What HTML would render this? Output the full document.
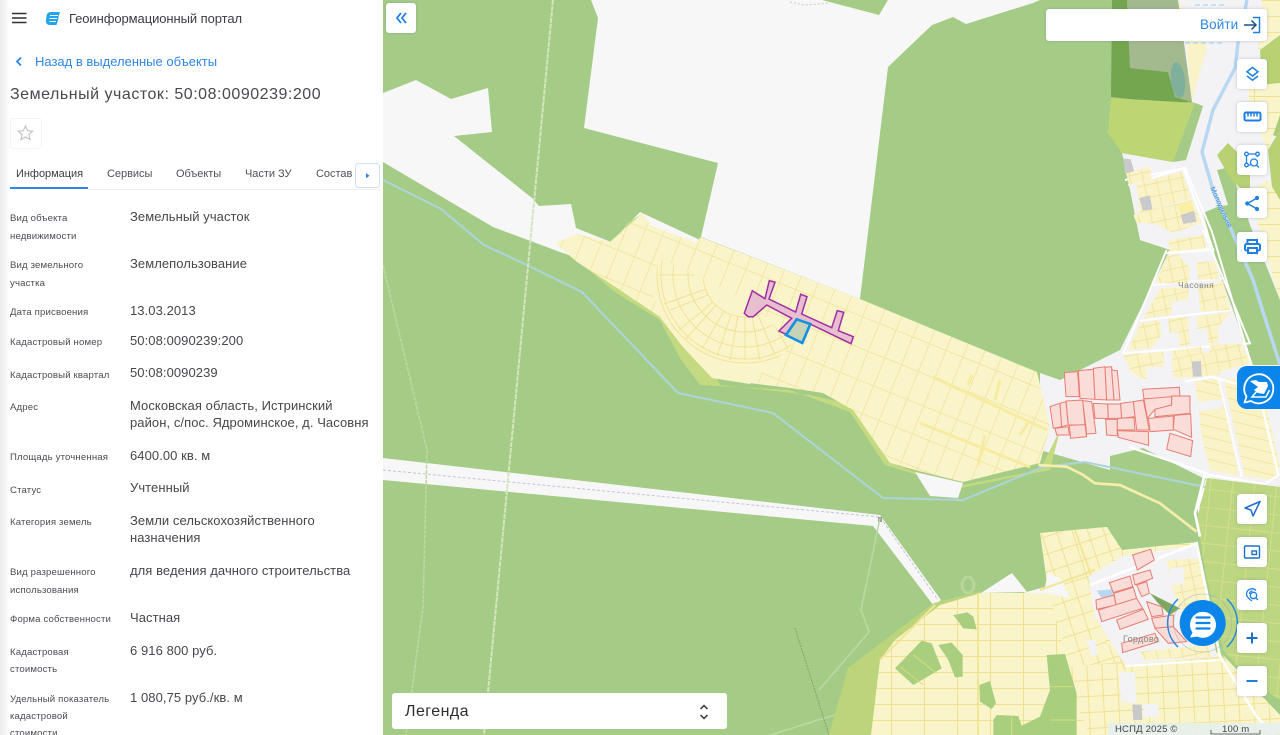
<!DOCTYPE html>
<html lang="ru"><head><meta charset="utf-8"><title>Геоинформационный портал</title>
<style>
html,body{margin:0;padding:0;width:1280px;height:735px;overflow:hidden;background:#a5cc86;font-family:"Liberation Sans","DejaVu Sans",sans-serif}
#map{position:absolute;left:0;top:0}
#panel{position:absolute;left:0;top:0;width:383px;height:735px;background:#fff;overflow:hidden;color:#3f4145}
#panel:before{content:"";position:absolute;left:0;top:0;width:10px;height:735px;background:linear-gradient(90deg,#ececec,#fff)}
.t{position:absolute;white-space:nowrap;line-height:16px}
.l{font-size:9.6px;color:#4a4d52;left:10px;letter-spacing:.15px}
.v{font-size:13px;color:#45474b;left:130px;letter-spacing:.07px}
.tab{font-size:11px;top:166px;color:#4e5156;letter-spacing:-.03px}
.b{position:absolute;left:1237px;width:30px;height:30px;background:#fff;border-radius:3px;box-shadow:0 0 3px rgba(90,110,150,.35)}
.b svg{position:absolute;left:0;top:0}
</style></head><body>
<svg id="map" width="1280" height="735" viewBox="0 0 1280 735" xmlns="http://www.w3.org/2000/svg">
<defs>
<pattern id="g1" width="18" height="30" patternUnits="userSpaceOnUse" patternTransform="rotate(22)"><rect width="18" height="30" fill="#faf4cb"/><path d="M0 .5H18M.5 0V30" stroke="#f1e6a3" stroke-width="1"/></pattern>
<pattern id="g2" width="33" height="16" patternUnits="userSpaceOnUse"><rect width="33" height="16" fill="#faf4cb"/><path d="M0 .5H33M.5 0V16" stroke="#efe28e" stroke-width="1"/></pattern>
<pattern id="g3" width="22" height="18" patternUnits="userSpaceOnUse" patternTransform="rotate(6)"><rect width="22" height="18" fill="#bcd681"/><path d="M0 .5H22M.5 0V18" stroke="#d4de8a" stroke-width="1.3"/></pattern>
<pattern id="g4" width="15" height="17" patternUnits="userSpaceOnUse" patternTransform="rotate(-18)"><rect width="15" height="17" fill="#faf4cb"/><path d="M0 .5H15M.5 0V17" stroke="#efe28e" stroke-width="1"/></pattern>
<pattern id="g5" width="15" height="16" patternUnits="userSpaceOnUse" patternTransform="rotate(-3)"><rect width="15" height="16" fill="#faf4cb"/><path d="M0 .5H15M.5 0V16" stroke="#efe28e" stroke-width="1"/></pattern>
<pattern id="z" width="38" height="38" patternUnits="userSpaceOnUse" patternTransform="rotate(-12)"><rect width="38" height="38" fill="#faf3c8"/><path d="M0 1H38M1 0V38" stroke="#efe29c" stroke-width="3"/></pattern>
<pattern id="h" width="80" height="32" patternUnits="userSpaceOnUse" patternTransform="rotate(14)"><rect width="80" height="32" fill="#faf3c8"/><path d="M0 1H80" stroke="#efe29c" stroke-width="3"/></pattern>
<clipPath id="arcclip"><polygon points="660,258 755,305 792,345 750,384 712,378 683,347 660,317 652,290"/></clipPath>
</defs>
<rect width="1280" height="735" fill="#a5cc86"/>
<!-- north white clearing -->
<polygon fill="#f7f7f8" points="591,0 598,18 584,128 718,163 701,237 860,299 888,67 932,25 953,17 966,24 1033,3 1040,0 888,0 879,15 822,0"/>
<!-- west white clearing -->
<polygon fill="#f7f7f8" points="383,93 416,80 451,99 488,88 492,132 454,136 532,198 539,206 571,204 576,228 611,242 640,212 700,240 700,300 560,252 493,227 383,162"/>
<!-- east base -->
<polygon fill="#f3f3f6" points="1127,0 1280,0 1280,487 1203,478 1143,448 1102,458 1073,443 1040,443 1040,373 1060,380 1120,350 1170,250 1140,240 1130,190 1122,153 1173,162 1203,106 1192,102 1178,0"/>
<polygon fill="#f3f3f6" points="1040,430 1110,440 1110,470 1040,450"/>
<!-- north-east fields -->
<polygon fill="#74a650" points="1112,0 1127,0 1130,68 1168,72 1175,97 1192,102 1165,103 1111,97"/>
<polygon fill="#a3b98e" points="1127,0 1178,0 1192,102 1175,97 1168,72 1130,68"/>
<ellipse cx="1178" cy="80" rx="7" ry="18" fill="#7fb09b" transform="rotate(-7 1178 80)"/>
<polygon fill="#bcd674" points="1111,98 1195,103 1173,162 1122,153 1108,133"/>
<polygon fill="#a5cc86" points="1195,103 1203,106 1186,160 1173,162"/>
<polygon fill="#faf3c8" points="1178,0 1207,47 1192,102 1186,40"/>
<path d="M1195 5h30M1190 10h40M1185 43h40" stroke="#b9dcef" stroke-width="1.5" stroke-dasharray="5 3" fill="none"/>
<!-- green strip by river -->
<polygon fill="#a5cc86" points="1217,170 1230,167 1250,225 1280,300 1280,365 1253,365 1222,280 1203,213 1217,207 1228,205"/>
<polygon fill="#b7d173" points="1217,155 1228,143 1250,165 1250,190 1240,188 1230,178"/>
<polygon fill="#b7d173" points="1260,50 1280,35 1280,83 1262,85"/>
<polygon fill="#a9cc7b" points="1270,118 1280,115 1280,137 1272,135"/>
<polygon fill="#b7d173" points="1268,150 1280,130 1280,200 1275,215"/>
<!-- right of river lots -->
<polygon fill="url(#g2)" points="1262,0 1280,0 1280,35 1258,50"/>
<polygon fill="url(#g2)" points="1246,60 1262,85 1280,83 1280,115 1268,150 1250,110"/>
<polygon fill="url(#g2)" points="1250,190 1268,180 1280,200 1280,300 1262,240"/>
<!-- river -->
<path d="M1247 0 1238 43 1235 68 1213 110 1202 152 1213 190 1230 227 1253 280 1280 365" fill="none" stroke="#b8d8f2" stroke-width="3.5"/>
<text x="0" y="0" font-size="7.5" fill="#3f8fd0" transform="translate(1210 188) rotate(66)">Молодильня</text>
<!-- white road to Chasovnya -->
<path d="M1125 180 1185 168 1212 232 1250 360 1280 470" fill="none" stroke="#fff" stroke-width="2"/>
<!-- upper village (zoom2 coordinates) -->
<g transform="translate(1040 0) scale(.3333)">
<polygon fill="#cacacc" points="250,475 272,478 283,515 256,522"/>
<polyline points="265,555 430,505 520,750 380,760" fill="none" stroke="#fff" stroke-width="6"/>
<polygon fill="url(#z)" points="258,520 330,500 335,538 270,555"/>
<polygon fill="url(#z)" points="290,552 425,515 455,595 300,640"/>
<polygon fill="url(#z)" points="280,645 455,600 485,668 400,700 340,670 290,670"/>
<polygon fill="url(#z)" points="385,725 490,705 500,745 392,755"/>
<polygon fill="#cacacc" points="298,594 330,586 337,628 308,632"/>
<polygon fill="#cacacc" points="422,645 462,632 470,665 430,672"/>
<polygon fill="#f9efa5" points="415,612 455,600 462,632 422,645"/>
<polygon fill="url(#z)" points="380,770 420,765 435,840 350,840"/>
<polygon fill="url(#z)" points="470,790 520,785 530,830 475,835"/>
</g>
<!-- Chasovnya -->
<g transform="translate(1110 230) scale(.3333)">
<polyline points="170,60 40,370 420,340 280,0" fill="none" stroke="#fff" stroke-width="6"/>
<polyline points="175,65 300,55" fill="none" stroke="#fff" stroke-width="5"/>
<polyline points="130,165 340,145" fill="none" stroke="#fff" stroke-width="5"/>
<polyline points="90,272 365,240" fill="none" stroke="#fff" stroke-width="5"/>
<polygon fill="url(#z)" points="175,30 280,15 290,55 180,65"/>
<polygon fill="url(#z)" points="140,160 175,75 205,75 240,115 235,160"/>
<polygon fill="url(#z)" points="262,95 315,95 330,148 265,150"/>
<polygon fill="url(#z)" points="150,175 235,170 235,210 185,215 185,255 100,265"/>
<polygon fill="url(#z)" points="265,172 340,155 360,240 270,245"/>
<polygon fill="url(#z)" points="55,360 90,280 150,270 155,315 125,355"/>
<polygon fill="url(#z)" points="260,260 365,245 325,290 325,340 295,340 290,295 262,298"/>
<polygon fill="url(#z)" points="175,265 235,262 240,345 210,350 205,308 178,308"/>
<polygon fill="url(#z)" points="40,375 160,365 160,410 110,412 108,450 65,430"/>
<polygon fill="url(#z)" points="185,362 275,350 280,440 190,445"/>
<polygon fill="url(#z)" points="300,345 395,340 420,400 290,435"/>
<polygon fill="#cacacc" points="245,395 275,394 276,440 248,440"/>
</g>
<!-- yellow lots east of pink -->
<g transform="translate(1165 360) scale(.3333)">
<polygon fill="url(#z)" points="20,0 160,-30 165,45 25,52"/>
<polygon fill="#cacacc" points="80,5 108,3 110,48 84,50"/>
<polygon fill="url(#h)" points="90,65 160,55 222,348 135,330 112,240"/>
<polygon fill="url(#h)" points="175,55 285,60 345,320 330,360 240,350"/>
<polyline points="-110,260 125,340 135,345 300,372 340,345 280,90 140,50 60,65" fill="none" stroke="#fff" stroke-width="7"/>
<polyline points="160,55 230,350" fill="none" stroke="#fff" stroke-width="5"/>
<polygon fill="#f3f3f6" points="96,125 170,118 175,142 100,155"/>
<polyline points="130,345 100,440 120,560 170,700 200,880" fill="none" stroke="#fff" stroke-width="7"/>
</g>
<!-- main settlement -->
<polygon fill="#c4da80" points="577,260 608,243 643,213 625,225 680,300 720,385 810,395 853,405 890,463 915,472 963,485 1040,470 1060,430 1050,470 960,488 885,465 850,412 790,390 700,385 680,358 660,320 615,292"/>
<polygon fill="url(#g1)" points="555,243 577,234 610,242 643,213 650,225 697,243 700,237 860,299 1037,372 1050,427 1040,463 963,482 915,470 890,463 853,410 823,393 790,388 750,383 712,378 683,347 660,317 617,288 577,262"/>
<!-- arc lots -->
<polygon fill="#faf4cb" points="660,258 755,305 792,345 750,384 712,378 683,347 660,317 652,290"/>
<g clip-path="url(#arcclip)" fill="none" stroke="#f0e395" stroke-width="1">
<circle cx="745" cy="275" r="42"/><circle cx="745" cy="275" r="57"/><circle cx="745" cy="275" r="72"/><circle cx="745" cy="275" r="84"/><circle cx="745" cy="275" r="88"/>
<path d="M766 311 788 349M752 316 760 360M738 316 730 360M724 311 702 349M713 302 679 330M706 289 664 304M703 275 659 275M745 317 745 360M731 315 717 356M716 305 685 340M708 295 670 310M758 315 775 355"/>
</g>
<path d="M920 423 1030 467M933 377 1047 430M985 435 978 465M972 375 968 385M1000 380 995 400M1030 420 1020 435" stroke="#f7eb9f" stroke-width="3" fill="none"/>
<polygon fill="#e8bfcf" stroke="#a12da5" stroke-width="1.5" points="752.3,290.7 765,298.7 769.3,280.7 775,282.3 769,299 795.7,312 800.7,294.3 807,296.7 801.7,314 831.7,327.7 837.3,310.7 843.7,312.3 838.3,330.7 853.3,336.7 851,343.7 810,324 785.3,334 779,331 791.7,318.3 766.7,305 753.3,316.7 748.3,316.7 744.3,313.3"/>
<polygon fill="#c6d3b4" stroke="#1390e2" stroke-width="2.6" points="796.7,319.3 810.3,324 802.3,343 786,335"/>
<!-- white patch below settlement -->
<polygon fill="#f7f7f8" points="915,472 963,483 958,498 930,496"/>
<polygon fill="#f7f7f8" points="750,383 790,388 760,384"/>
<!-- blue line -->
<path d="M383 180 441 209 484 245 527 265 582 292 678 393 773 413 883 498 963 500 1043 467 1085 462 1205 487 1280 512" fill="none" stroke="#afd3dc" stroke-width="2"/>
<!-- road white band -->
<polygon fill="#f7f7f8" points="383,458 880,515 941,600 934,606 873,526 383,480"/>
<path d="M383 470 880 517 938 600" fill="none" stroke="#c4c4d6" stroke-width="1" stroke-dasharray="3 2"/>
<rect x="878" y="517" width="4" height="5" fill="#9a9a9a"/>
<!-- faint lines -->
<path d="M553 0 484 735" fill="none" stroke="#d2e6bf" stroke-width="2" stroke-dasharray="5 1"/>
<path d="M383 265 427 450 423 607 406 735" fill="none" stroke="#bdd8a6" stroke-width="1.500" stroke-dasharray="4 1"/>
<path d="M880 518 861 610 869 632 819 690M867 705 770 735" fill="none" stroke="#bdd8a6" stroke-width="1.500"/>
<path d="M795 628 829 735" fill="none" stroke="#86a072" stroke-width="1" stroke-dasharray="2 1"/>
<path d="M790 2 805 5 830 3" fill="none" stroke="#c9c9cc" stroke-width="1" stroke-dasharray="2 2"/>
<!-- watermark -->
<ellipse cx="968" cy="585" rx="6" ry="8" fill="none" stroke="#b6d69c" stroke-width="3"/>
<polygon fill="#f7f7f8" points="981,593 1012,573 1027,592"/>
<!-- south settlement -->
<polygon fill="#bcd57a" points="829,735 848,668 934,603 981,591 981,600 895,640 871,735"/>
<polygon fill="url(#g2)" points="871,735 880,660 895,640 940,605 981,593 1023,593 1045,587 1048,572 1040,533 1107,527 1122,550 1197,542 1217,657 1257,717 1273,735"/>
<polygon fill="url(#g4)" points="1040,533 1107,527 1122,552 1090,578 1105,640 1125,665 1070,670 1048,590"/>
<polygon fill="url(#g5)" points="1060,668 1220,652 1257,717 1273,735 1090,735"/>
<polygon fill="#f7f7f8" points="1023,593 1045,587 1048,572 1062,580 1070,598 1050,594"/>
<path d="M1075 530 1125 670M1040 590 1095 570M978 593V735M880 660 935 605" stroke="#f1e698" stroke-width="2" fill="none"/>
<!-- green patches (zoom12) -->
<g transform="translate(880 580) scale(.3333)" fill="#a9cf7e">
<polygon points="45,265 125,182 155,190 185,265 100,315"/>
<polygon points="175,195 215,188 248,225 248,290 225,292 205,240"/>
<polygon points="220,105 262,97 280,110 290,148 250,145"/>
<polygon points="298,315 330,303 348,370 335,387 300,365"/>
<polygon points="340,420 350,405 415,408 425,437 480,410 510,330 500,225 555,222 590,340 590,465 340,465"/>
<path d="M60 260 130 315M100 225 170 280M510 320H580M510 420H590M395 410V465" stroke="#d5dc7c" stroke-width="3" fill="none"/>
<polygon fill="#f3f3f6" points="620,180 645,180 652,225 635,228"/>
<polygon fill="#f3f3f6" points="716,278 765,276 768,370 724,365"/>
<polygon fill="#f3f3f6" points="790,372 835,372 835,412 790,412"/>
<polygon fill="#c9c9cb" points="757,374 785,374 787,420 760,420"/>
</g>
<!-- light green east -->
<polygon fill="url(#g3)" points="1207,478 1280,487 1280,700 1250,680 1223,650 1205,570 1197,520"/>
<polygon fill="url(#g5)" points="1223,655 1280,715 1280,735 1255,735"/>
<!-- south white village & pink (zoom3 coordinates) -->
<g transform="translate(1040 350) scale(.3333)">
<polygon fill="#f3f3f6" points="145,680 245,620 470,585 530,920 255,945 165,800"/>
<polygon fill="url(#z)" points="380,630 480,625 510,790 420,780 395,710"/>
<polygon fill="#f3f3f6" points="388,655 430,650 432,702 392,705"/>
<polygon fill="url(#z)" points="300,905 500,885 515,920 310,930"/>
<polyline points="150,705 470,580 540,920 650,1100 700,1155" fill="none" stroke="#fff" stroke-width="8"/>
<polyline points="255,948 540,930" fill="none" stroke="#fff" stroke-width="6"/>
<polyline points="-5,345 80,350 130,375 165,400 240,405 360,460 470,545" fill="none" stroke="#f6eeaa" stroke-width="8"/>
<polyline points="495,370 465,490 480,560" fill="none" stroke="#fff" stroke-width="8"/>
<polygon fill="#b8d8f2" points="170,722 215,718 225,745 185,745"/>
<polygon fill="#7ea85f" points="330,730 390,760 420,775 390,795 350,755"/>
<g fill="#fadcd8" stroke="#e87d72" stroke-width="3">
<polygon points="73,68 113,65 118,140 78,140"/><polygon points="115,62 160,58 165,148 120,145"/><polygon points="160,55 195,50 200,150 165,148"/><polygon points="195,52 215,50 222,150 200,150"/><polygon points="215,60 232,62 240,150 222,150"/>
<polygon points="30,170 60,160 65,230 40,235"/><polygon points="60,160 78,155 85,225 65,230"/><polygon points="78,153 128,150 135,225 85,225"/><polygon points="128,152 155,155 168,250 140,252"/><polygon points="45,235 85,230 88,255 50,255"/><polygon points="88,226 135,224 140,260 92,265"/>
<polygon points="160,160 203,162 205,205 165,205"/><polygon points="203,162 242,162 245,205 205,205"/><polygon points="242,160 280,155 285,200 245,205"/><polygon points="280,155 310,150 328,240 290,240"/>
<polygon points="197,208 232,208 232,258 200,255"/><polygon points="232,205 282,203 285,240 232,240"/><polygon points="232,242 325,245 326,286 235,262"/>
<polygon points="308,118 418,112 420,140 312,147"/><polygon points="312,147 395,140 395,165 345,178 322,205"/><polygon points="345,178 395,165 395,138 450,138 450,190 345,200"/><polygon points="325,205 400,198 400,240 330,245"/><polygon points="403,196 452,192 455,262 400,238"/><polygon points="390,250 458,272 452,320 380,298"/>
<polygon points="278,615 332,598 343,630 292,660"/><polygon points="278,675 330,660 338,685 285,705"/><polygon points="290,705 320,695 328,730 305,740"/><polygon points="208,698 270,678 278,710 220,728"/><polygon points="222,730 280,712 290,745 228,765"/><polygon points="168,750 222,735 228,765 170,778"/><polygon points="175,780 290,745 308,775 185,815"/><polygon points="230,810 310,778 325,808 240,838"/><polygon points="320,755 365,770 370,795 335,800"/><polygon points="335,805 400,795 400,830 345,835"/><polygon points="345,835 400,830 440,875 385,880"/><polygon points="245,880 345,850 355,875 248,908"/>
</g>
</g>
<text x="1123" y="642" font-size="9" fill="#85857d" letter-spacing=".3">Гордово</text>
<text x="1178" y="288" font-size="8.5" fill="#85857d" letter-spacing=".4">Часовня</text>
<!-- chat -->
<g fill="none">
<circle cx="1202.7" cy="623" r="29" stroke="#a4aeb5" stroke-width=".8" opacity=".6"/>
<path d="M1178 647A33 33 0 0 1 1178 599M1227 599A33 33 0 0 1 1227 647" stroke="#1e88e5" stroke-width="1.500"/>
</g>
<circle cx="1202.7" cy="623" r="23" fill="#0c85ea"/>
<path d="M1190 637.500l2.500-5a13 13 0 1 1 5 4.100z" fill="#fff"/>
<path d="M1196.500 617.500h13M1196.500 623h13M1196.500 628.500h13" stroke="#0c85ea" stroke-width="2.200" stroke-linecap="round"/>
<!-- attribution -->
<rect x="1108" y="723" width="172" height="12" fill="#e4f0ee" opacity=".85"/>
<text x="1115" y="732" font-size="9.500" fill="#3f444a" letter-spacing=".2">НСПД 2025 ©</text>
<text x="1222" y="732" font-size="9.500" fill="#3f444a" letter-spacing=".2">100 m</text>
<path d="M1211 730v4h49v-4" fill="none" stroke="#444" stroke-width=".8"/>
</svg>

<!-- Sidebar -->
<div id="panel">
<svg style="position:absolute;left:0;top:0" width="383" height="195">
<path d="M12 13.500h14.500M12 18h14.500M12 22.500h14.500" stroke="#2d2f33" stroke-width="1.500"/>
<path d="M46.500 16.500c0-3 2-4.500 4.500-4.500h9l-1.200 3.500-.5 3-.8 3.500-1 3h-6.500c-2.500 0-4.200-1.500-4.200-4z" fill="#25a4ee"/>
<path d="M50 15.500h8M49.500 18.500h7.500M49.500 21.500h6.500" stroke="#fff" stroke-width="1.100"/>
<path d="M21 57.500 17 61.500 21 65.500" fill="none" stroke="#2f86e6" stroke-width="1.800"/>
<rect x="10.500" y="118.500" width="31" height="30" rx="3" fill="#fff" stroke="#f4f4f4"/>
<path d="M25.500 126l2.100 4.700 5.100.5-3.800 3.400 1.100 5-4.500-2.600-4.500 2.600 1.100-5-3.800-3.400 5.100-.5z" fill="none" stroke="#c4c4c4" stroke-width="1.200"/>
<rect x="10" y="187" width="78" height="2" fill="#2f86e6"/>
<rect x="88" y="189" width="292" height="1" fill="#efefef"/>
<rect x="355.500" y="163.500" width="24" height="24" rx="3" fill="#fff" stroke="#cfe0f2"/>
<path d="M366 173l3.500 2.700-3.500 2.700z" fill="#2f86e6"/>
</svg>
<div class="t" style="left:69px;top:11px;font-size:13px;color:#3a3c40;letter-spacing:-.07px">Геоинформационный портал</div>
<div class="t" style="left:35px;top:54px;font-size:13px;color:#2f86e6;letter-spacing:0">Назад в выделенные объекты</div>
<div class="t" style="left:10px;top:86px;font-size:16px;color:#47494d;letter-spacing:.52px;line-height:18px">Земельный участок: 50:08:0090239:200</div>
<div class="t tab" style="left:16px;color:#3c3e42">Информация</div>
<div class="t tab" style="left:107px">Сервисы</div>
<div class="t tab" style="left:176px">Объекты</div>
<div class="t tab" style="left:245px">Части ЗУ</div>
<div class="t tab" style="left:316px">Состав</div>

<div class="t l" style="top:211px">Вид объекта</div><div class="t l" style="top:229px">недвижимости</div><div class="t v" style="top:209px">Земельный участок</div>
<div class="t l" style="top:258px">Вид земельного</div><div class="t l" style="top:276px">участка</div><div class="t v" style="top:256px">Землепользование</div>
<div class="t l" style="top:305px">Дата присвоения</div><div class="t v" style="top:303px">13.03.2013</div>
<div class="t l" style="top:335px">Кадастровый номер</div><div class="t v" style="top:333px">50:08:0090239:200</div>
<div class="t l" style="top:368px">Кадастровый квартал</div><div class="t v" style="top:365px">50:08:0090239</div>
<div class="t l" style="top:400px">Адрес</div><div class="t v" style="top:398px">Московская область, Истринский</div><div class="t v" style="top:415px">район, с/пос. Ядроминское, д. Часовня</div>
<div class="t l" style="top:450px">Площадь уточненная</div><div class="t v" style="top:448px">6400.00 кв. м</div>
<div class="t l" style="top:483px">Статус</div><div class="t v" style="top:480px">Учтенный</div>
<div class="t l" style="top:515px">Категория земель</div><div class="t v" style="top:513px">Земли сельскохозяйственного</div><div class="t v" style="top:530px">назначения</div>
<div class="t l" style="top:565px">Вид разрешенного</div><div class="t l" style="top:583px">использования</div><div class="t v" style="top:563px">для ведения дачного строительства</div>
<div class="t l" style="top:612px">Форма собственности</div><div class="t v" style="top:610px">Частная</div>
<div class="t l" style="top:645px">Кадастровая</div><div class="t l" style="top:662px">стоимость</div><div class="t v" style="top:643px">6 916 800 руб.</div>
<div class="t l" style="top:692px">Удельный показатель</div><div class="t l" style="top:709px">кадастровой</div><div class="t l" style="top:726px">стоимости</div><div class="t v" style="top:690px">1 080,75 руб./кв. м</div>
</div>

<!-- Collapse -->
<div class="b" style="left:386px;top:3px;width:30px;height:30px">
<svg width="30" height="30"><path d="M15 10 11 15 15 20M20 10 16 15 20 20" fill="none" stroke="#1f7fe0" stroke-width="1.800"/></svg></div>
<!-- Login -->
<div style="position:absolute;left:1046px;top:9px;width:221px;height:32px;background:#fff;border-radius:3px;box-shadow:0 0 3px rgba(90,110,150,.35)">
<div class="t" style="left:154px;top:8px;font-size:13.500px;color:#2f86e6;letter-spacing:.1px">Войти</div>
<svg style="position:absolute;left:197px;top:7px" width="20" height="18"><path d="M10 1.500h6.500v15H10" fill="none" stroke="#1f7fe0" stroke-width="1.500"/><path d="M1 9h11M8.500 4.500 13 9 8.500 13.500" fill="none" stroke="#1b4f8a" stroke-width="1.500"/></svg>
</div>
<!-- Tool buttons -->
<div class="b" style="top:59px"><svg width="30" height="30"><path d="M15.500 8.500l5.500 4.200-5.500 4.300-5.500-4.300z" fill="none" stroke="#1f7fe0" stroke-width="1.500"/><path d="M10 17 15.500 21.200 21 17" fill="none" stroke="#1f7fe0" stroke-width="1.500"/></svg></div>
<div class="b" style="top:102px"><svg width="30" height="30"><rect x="7.500" y="10.500" width="16" height="8" rx="1.500" fill="none" stroke="#1f7fe0" stroke-width="2"/><path d="M11 10.500v4M14 10.500v4M17 10.500v4M20 10.500v4" stroke="#1f7fe0" stroke-width="1.500"/></svg></div>
<div class="b" style="top:145px"><svg width="30" height="30" fill="none" stroke="#1f7fe0" stroke-width="1.300"><circle cx="9.500" cy="9" r="1.800"/><circle cx="20.500" cy="9" r="1.800"/><circle cx="9.500" cy="20" r="1.800"/><path d="M11.500 9h7M9.500 11v7M20.500 11v1M11.500 20h2"/><circle cx="17" cy="17.500" r="3.500"/><path d="M19.500 20l2.500 2.500"/></svg></div>
<div class="b" style="top:188px"><svg width="30" height="30"><path d="M20 10 10.500 15.500l9.500 5.500" fill="none" stroke="#1f7fe0" stroke-width="1.500"/><circle cx="20" cy="10" r="2.100" fill="#1f7fe0"/><circle cx="10.300" cy="15.500" r="2.100" fill="#1f7fe0"/><circle cx="20" cy="21" r="2.100" fill="#1f7fe0"/></svg></div>
<div class="b" style="top:232px"><svg width="30" height="30" fill="none" stroke="#1f7fe0" stroke-width="2"><path d="M10.500 12V8h9.500v4"/><rect x="8" y="12" width="15" height="6.500" rx="1.500"/><path d="M11 16h9v5h-9z" fill="#fff"/></svg></div>
<div class="b" style="top:494px"><svg width="30" height="30"><path d="M23 7.500 8 14l6 2 2 6z" fill="none" stroke="#1f6fc8" stroke-width="1.500" stroke-linejoin="round"/></svg></div>
<div class="b" style="top:537px"><svg width="30" height="30" fill="none" stroke="#1f6fc8" stroke-width="1.400"><rect x="7.500" y="9" width="15" height="12" rx="1"/><rect x="15" y="14" width="4.500" height="3.500"/></svg></div>
<div class="b" style="top:580px"><svg width="30" height="30" fill="none" stroke="#1f7fe0" stroke-width="1.300"><path d="M15 21c-3-2-5.500-4.500-5.500-7a5.500 5.500 0 0 1 9.500-3.500"/><circle cx="16.500" cy="15.500" r="3.200"/><path d="M19 18l2 2"/><path d="M12.500 14a2.800 2.800 0 0 1 3-3"/></svg></div>
<div class="b" style="top:623px"><svg width="30" height="30"><path d="M15 9.500v11M9.500 15h11" stroke="#1f6fc8" stroke-width="2"/></svg></div>
<div class="b" style="top:666px"><svg width="30" height="30"><path d="M9.500 15h11" stroke="#1f7fe0" stroke-width="2"/></svg></div>
<!-- Blue tab -->
<div style="position:absolute;left:1237px;top:366px;width:43px;height:43px;background:#0c85ea;border-radius:10px 0 0 10px">
<svg width="43" height="43" style="position:absolute;left:0;top:0"><path d="M7.500 36.500 9.500 30.500A14.500 14.500 0 1 1 14 35z" fill="none" stroke="#fff" stroke-width="1.800" stroke-linejoin="round"/><polygon points="13,15 19,14 22,16 30,16 31,20 27,28 21,27 17,24 21,21" fill="#fff"/><path d="M20 25 15 31H29L32.500 24" fill="none" stroke="#fff" stroke-width="1.500"/></svg>
</div>
<!-- Legend -->
<div style="position:absolute;left:392px;top:693px;width:335px;height:36px;background:#fff;border-radius:3px">
<div class="t" style="left:13px;top:10px;font-size:16px;color:#2b2d30;letter-spacing:.45px;line-height:18px">Легенда</div>
<svg style="position:absolute;left:306px;top:10px" width="12" height="18"><path d="M2.500 6 6 2.500 9.500 6M2.500 12 6 15.500 9.500 12" fill="none" stroke="#33363a" stroke-width="1.500"/></svg>
</div>
</body></html>
